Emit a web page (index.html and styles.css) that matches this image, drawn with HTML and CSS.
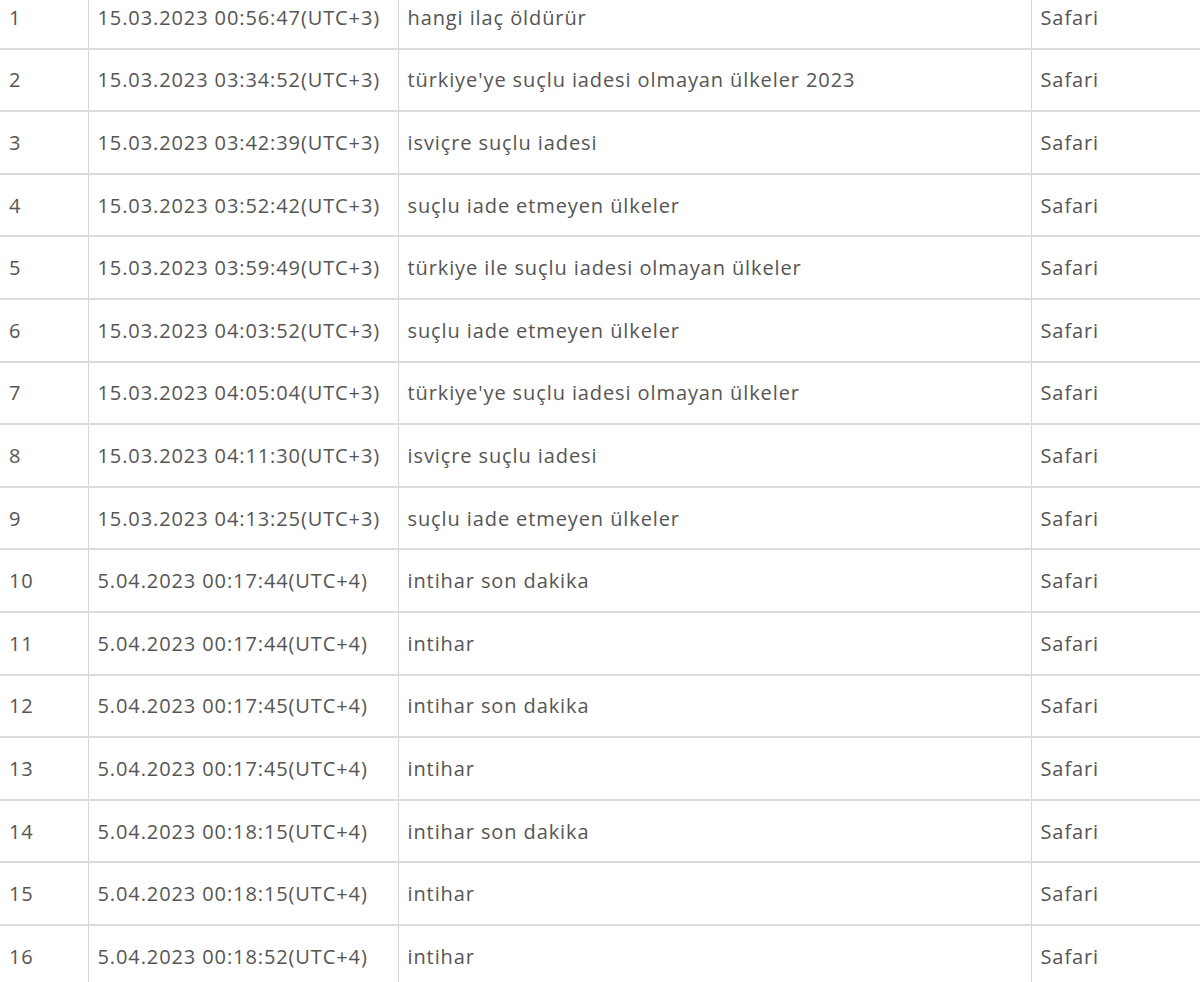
FILE: index.html
```html
<!DOCTYPE html>
<html lang="tr">
<head>
<meta charset="utf-8">
<title>Arama geçmişi</title>
<link rel="stylesheet" href="styles.css">
</head>
<body>
<table class="log">
<colgroup><col class="c-no"><col class="c-date"><col class="c-query"><col class="c-browser"></colgroup>
<tbody>
<tr><td>1</td><td>15.03.2023 00:56:47(UTC+3)</td><td>hangi ilaç öldürür</td><td>Safari</td></tr>
<tr><td>2</td><td>15.03.2023 03:34:52(UTC+3)</td><td>türkiye'ye suçlu iadesi olmayan ülkeler 2023</td><td>Safari</td></tr>
<tr><td>3</td><td>15.03.2023 03:42:39(UTC+3)</td><td>isviçre suçlu iadesi</td><td>Safari</td></tr>
<tr><td>4</td><td>15.03.2023 03:52:42(UTC+3)</td><td>suçlu iade etmeyen ülkeler</td><td>Safari</td></tr>
<tr><td>5</td><td>15.03.2023 03:59:49(UTC+3)</td><td>türkiye ile suçlu iadesi olmayan ülkeler</td><td>Safari</td></tr>
<tr><td>6</td><td>15.03.2023 04:03:52(UTC+3)</td><td>suçlu iade etmeyen ülkeler</td><td>Safari</td></tr>
<tr><td>7</td><td>15.03.2023 04:05:04(UTC+3)</td><td>türkiye'ye suçlu iadesi olmayan ülkeler</td><td>Safari</td></tr>
<tr><td>8</td><td>15.03.2023 04:11:30(UTC+3)</td><td>isviçre suçlu iadesi</td><td>Safari</td></tr>
<tr><td>9</td><td>15.03.2023 04:13:25(UTC+3)</td><td>suçlu iade etmeyen ülkeler</td><td>Safari</td></tr>
<tr><td>10</td><td>5.04.2023 00:17:44(UTC+4)</td><td>intihar son dakika</td><td>Safari</td></tr>
<tr><td>11</td><td>5.04.2023 00:17:44(UTC+4)</td><td>intihar</td><td>Safari</td></tr>
<tr><td>12</td><td>5.04.2023 00:17:45(UTC+4)</td><td>intihar son dakika</td><td>Safari</td></tr>
<tr><td>13</td><td>5.04.2023 00:17:45(UTC+4)</td><td>intihar</td><td>Safari</td></tr>
<tr><td>14</td><td>5.04.2023 00:18:15(UTC+4)</td><td>intihar son dakika</td><td>Safari</td></tr>
<tr><td>15</td><td>5.04.2023 00:18:15(UTC+4)</td><td>intihar</td><td>Safari</td></tr>
<tr><td>16</td><td>5.04.2023 00:18:52(UTC+4)</td><td>intihar</td><td>Safari</td></tr>
</tbody>
</table>
</body>
</html>
```

FILE: styles.css
```css
html, body {
  margin: 0;
  padding: 0;
  background: #ffffff;
  overflow: hidden;
}

.log {
  border-collapse: collapse;
  table-layout: fixed;
  width: 1202px;
  margin-top: -15px;
  font-family: "Open Sans", "Noto Sans", sans-serif;
  font-size: 20px;
  letter-spacing: 0.9px;
  color: #555555;
}

.c-no { width: 88px; }
.c-date { width: 310px; }
.c-query { width: 633px; }
.c-browser { width: 171px; }

.log td {
  height: 62.6px;
  box-sizing: border-box;
  padding: 0 0 0 9px;
  border-top: 2px solid #dcdcdc;
  border-bottom: 2px solid #dcdcdc;
  border-left: 1px solid #d6d6d6;
  white-space: nowrap;
  vertical-align: middle;
}

.log td:first-child {
  border-left: none;
}
```
